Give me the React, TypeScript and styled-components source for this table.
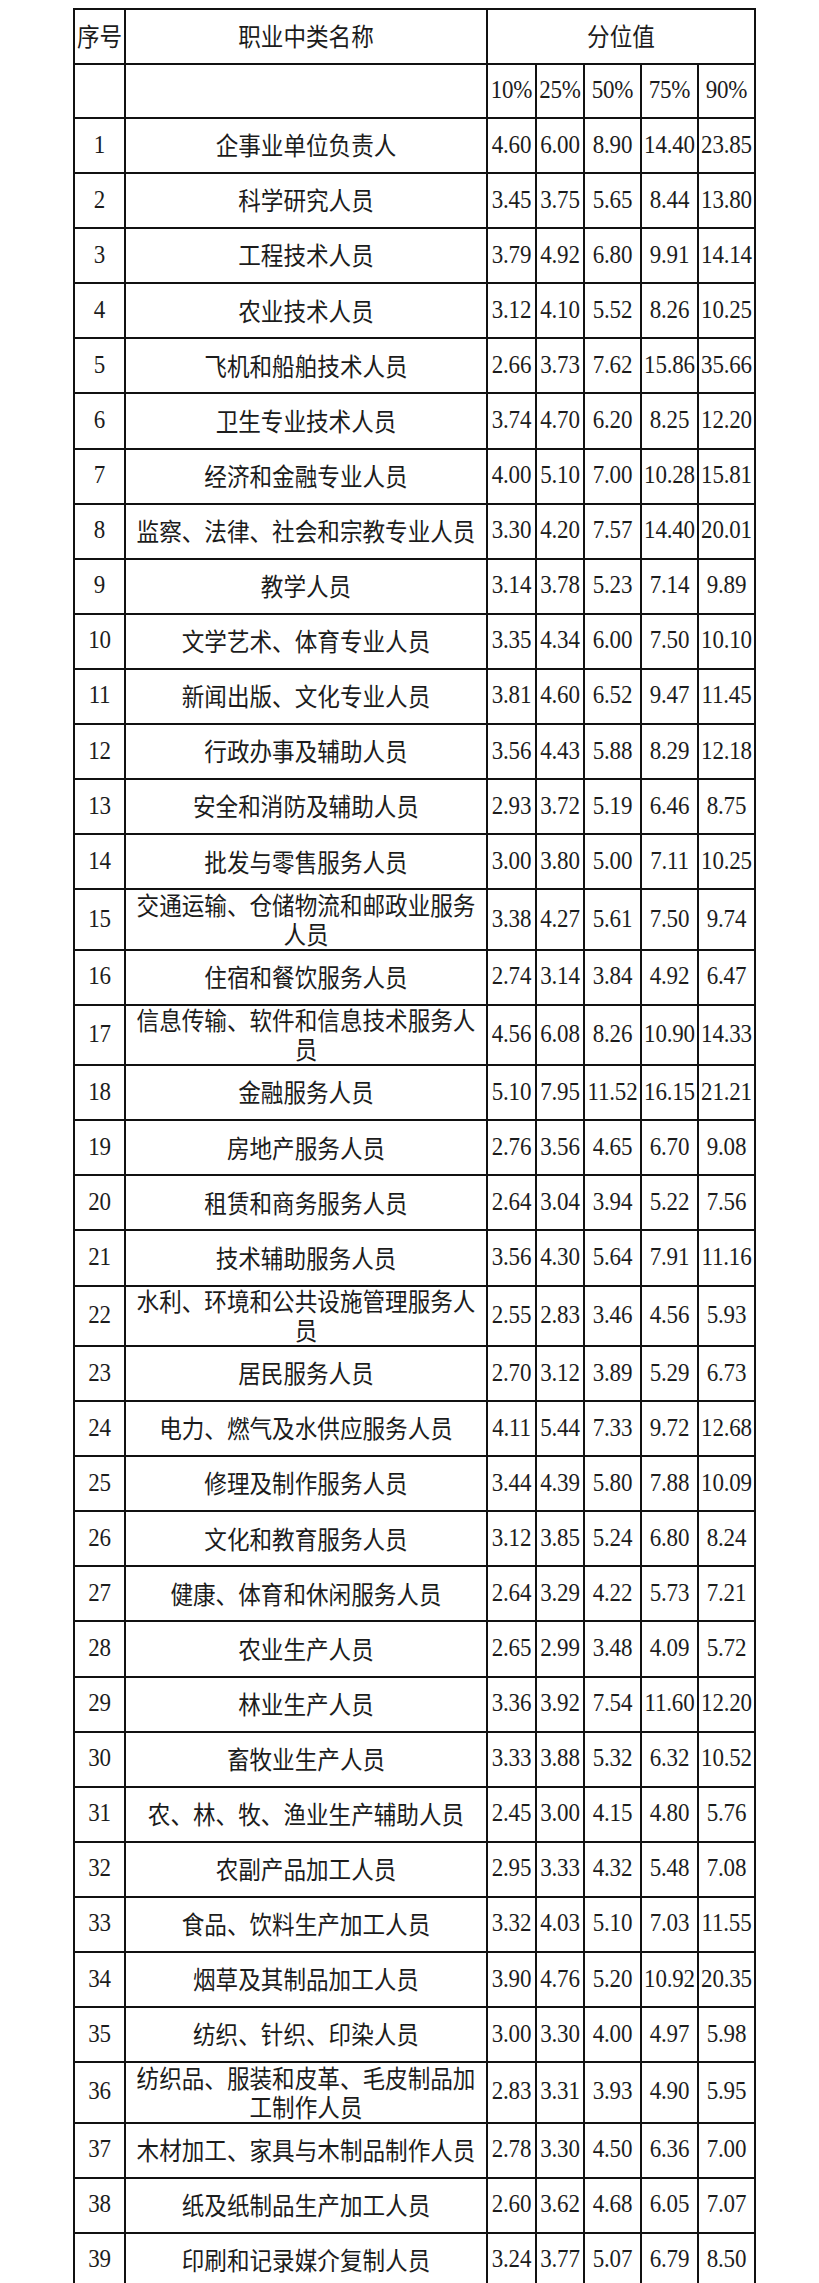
import React from "react"
import styled, { createGlobalStyle } from "styled-components"

const GlobalStyle = createGlobalStyle`
  html, body {
    margin: 0;
    padding: 0;
    background: #ffffff;
  }
`

const Page = styled.div`
  padding: 8px 0 0 73px;
  background: #ffffff;
`

const Table = styled.div`
  display: flex;
  flex-direction: column;
  gap: 2px;
  padding: 2px;
  width: 679px;
  background: #111111;
`

interface RowProps {
  h: number
}
const Row = styled.div<RowProps>`
  display: grid;
  grid-template-columns: 49px 360px 47px 46px 55px 55px 55px;
  gap: 2px;
  height: ${props => props.h}px;
`

interface CellProps {
  span?: number
}
const Cell = styled.div<CellProps>`
  grid-column: ${props => (props.span ? `span ${props.span}` : "auto")};
  display: flex;
  align-items: center;
  justify-content: center;
  background: #ffffff;
  color: #1c1c1c;
  text-align: center;
`

const Label = styled(Cell)`
  font-family: "Noto Sans CJK SC", "Noto Sans", sans-serif;
  font-size: 22.6px;
  line-height: 26.5px;
  padding: 0 6px;
`

const HeaderLabel = styled(Label)`
  padding: 0;
`

const Num = styled(Cell)`
  font-family: "Liberation Serif", "Times New Roman", serif;
  font-size: 23px;
  white-space: nowrap;
  letter-spacing: -0.2px;
`

// the source document is slightly stretched vertically
const Stretch = styled.span<{ k: number }>`
  display: inline-block;
  transform: scaleY(${props => props.k});
`

type Item = [string, string[]]

const rows: Item[] = [
  ["企事业单位负责人", ["4.60", "6.00", "8.90", "14.40", "23.85"]],
  ["科学研究人员", ["3.45", "3.75", "5.65", "8.44", "13.80"]],
  ["工程技术人员", ["3.79", "4.92", "6.80", "9.91", "14.14"]],
  ["农业技术人员", ["3.12", "4.10", "5.52", "8.26", "10.25"]],
  ["飞机和船舶技术人员", ["2.66", "3.73", "7.62", "15.86", "35.66"]],
  ["卫生专业技术人员", ["3.74", "4.70", "6.20", "8.25", "12.20"]],
  ["经济和金融专业人员", ["4.00", "5.10", "7.00", "10.28", "15.81"]],
  ["监察、法律、社会和宗教专业人员", ["3.30", "4.20", "7.57", "14.40", "20.01"]],
  ["教学人员", ["3.14", "3.78", "5.23", "7.14", "9.89"]],
  ["文学艺术、体育专业人员", ["3.35", "4.34", "6.00", "7.50", "10.10"]],
  ["新闻出版、文化专业人员", ["3.81", "4.60", "6.52", "9.47", "11.45"]],
  ["行政办事及辅助人员", ["3.56", "4.43", "5.88", "8.29", "12.18"]],
  ["安全和消防及辅助人员", ["2.93", "3.72", "5.19", "6.46", "8.75"]],
  ["批发与零售服务人员", ["3.00", "3.80", "5.00", "7.11", "10.25"]],
  ["交通运输、仓储物流和邮政业服务人员", ["3.38", "4.27", "5.61", "7.50", "9.74"]],
  ["住宿和餐饮服务人员", ["2.74", "3.14", "3.84", "4.92", "6.47"]],
  ["信息传输、软件和信息技术服务人员", ["4.56", "6.08", "8.26", "10.90", "14.33"]],
  ["金融服务人员", ["5.10", "7.95", "11.52", "16.15", "21.21"]],
  ["房地产服务人员", ["2.76", "3.56", "4.65", "6.70", "9.08"]],
  ["租赁和商务服务人员", ["2.64", "3.04", "3.94", "5.22", "7.56"]],
  ["技术辅助服务人员", ["3.56", "4.30", "5.64", "7.91", "11.16"]],
  ["水利、环境和公共设施管理服务人员", ["2.55", "2.83", "3.46", "4.56", "5.93"]],
  ["居民服务人员", ["2.70", "3.12", "3.89", "5.29", "6.73"]],
  ["电力、燃气及水供应服务人员", ["4.11", "5.44", "7.33", "9.72", "12.68"]],
  ["修理及制作服务人员", ["3.44", "4.39", "5.80", "7.88", "10.09"]],
  ["文化和教育服务人员", ["3.12", "3.85", "5.24", "6.80", "8.24"]],
  ["健康、体育和休闲服务人员", ["2.64", "3.29", "4.22", "5.73", "7.21"]],
  ["农业生产人员", ["2.65", "2.99", "3.48", "4.09", "5.72"]],
  ["林业生产人员", ["3.36", "3.92", "7.54", "11.60", "12.20"]],
  ["畜牧业生产人员", ["3.33", "3.88", "5.32", "6.32", "10.52"]],
  ["农、林、牧、渔业生产辅助人员", ["2.45", "3.00", "4.15", "4.80", "5.76"]],
  ["农副产品加工人员", ["2.95", "3.33", "4.32", "5.48", "7.08"]],
  ["食品、饮料生产加工人员", ["3.32", "4.03", "5.10", "7.03", "11.55"]],
  ["烟草及其制品加工人员", ["3.90", "4.76", "5.20", "10.92", "20.35"]],
  ["纺织、针织、印染人员", ["3.00", "3.30", "4.00", "4.97", "5.98"]],
  ["纺织品、服装和皮革、毛皮制品加工制作人员", ["2.83", "3.31", "3.93", "4.90", "5.95"]],
  ["木材加工、家具与木制品制作人员", ["2.78", "3.30", "4.50", "6.36", "7.00"]],
  ["纸及纸制品生产加工人员", ["2.60", "3.62", "4.68", "6.05", "7.07"]],
  ["印刷和记录媒介复制人员", ["3.24", "3.77", "5.07", "6.79", "8.50"]],
]

const percents = ["10%", "25%", "50%", "75%", "90%"]

// names longer than 15 characters wrap onto a second line
const rowHeight = (name: string) => (name.length > 15 ? 58.4 : 53.1)

const CJK = 1.1
const DIGITS = 1.06

export default function App() {
  return (
    <Page>
      <GlobalStyle />
      <Table>
        <Row h={52.5}>
          <HeaderLabel>
            <Stretch k={CJK}>序号</Stretch>
          </HeaderLabel>
          <HeaderLabel>
            <Stretch k={CJK}>职业中类名称</Stretch>
          </HeaderLabel>
          <HeaderLabel span={5}>
            <Stretch k={CJK}>分位值</Stretch>
          </HeaderLabel>
        </Row>
        <Row h={52.5}>
          <Cell />
          <Cell />
          {percents.map(p => (
            <Num key={p}>
              <Stretch k={DIGITS}>{p}</Stretch>
            </Num>
          ))}
        </Row>
        {rows.map(([name, values], idx) => (
          <Row key={idx} h={rowHeight(name)}>
            <Num>
              <Stretch k={DIGITS}>{idx + 1}</Stretch>
            </Num>
            <Label>
              <Stretch k={CJK}>{name}</Stretch>
            </Label>
            {values.map((v, i) => (
              <Num key={i}>
                <Stretch k={DIGITS}>{v}</Stretch>
              </Num>
            ))}
          </Row>
        ))}
      </Table>
    </Page>
  )
}
